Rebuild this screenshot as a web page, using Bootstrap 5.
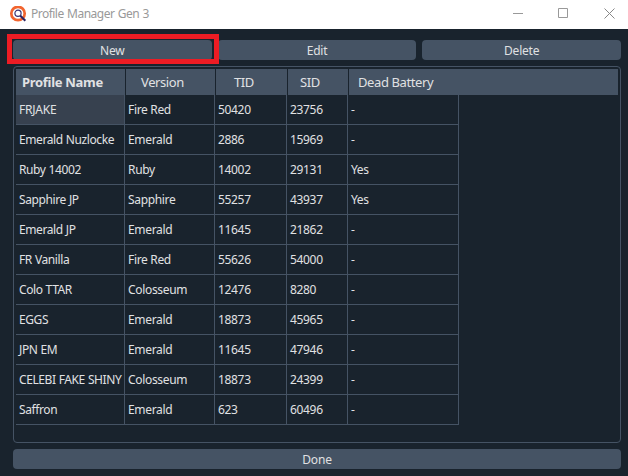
<!DOCTYPE html>
<html lang="en">
<head>
<meta charset="utf-8">
<title>Profile Manager Gen 3</title>
<link href="https://cdn.jsdelivr.net/npm/bootstrap@5.3.0/dist/css/bootstrap.min.css" rel="stylesheet">
<style>
body{width:628px;height:476px;overflow:hidden;background:#19232d;color:#e0e1e3;font:12px/18px "Noto Sans","Open Sans",sans-serif;letter-spacing:-.33px}
.titlebar{height:29px;background:#fff;color:#999;padding-left:9px}
.titlebar .caption{margin-left:4px;padding-bottom:1px;letter-spacing:-.52px;word-spacing:.8px}
.winctl{width:46px;height:27px}
.winctls{margin-right:-5px}
.client{height:447px;padding:11px 7px 7px 13px}
.tool{height:20px;padding:0;border:0;border-radius:4px;background:#455364;color:#e0e1e3;font-size:12px;line-height:21px;letter-spacing:-.2px}
.tool:hover{background:#54687a;color:#fff}
.actions{gap:6px}
.highlight{left:-6px;top:-6px;width:212px;height:30px;border:5px solid #ed1c24;pointer-events:none}
.frame{height:377px;margin:6px 0;border:1px solid #455364;border-radius:4px;padding:2px}
.grid-head{height:26px;background:#455364;font-size:13px;line-height:27px;letter-spacing:-.4px}
.grid-head>div{white-space:nowrap}
.grid-head>div+div{border-left:1px solid #19232d}
.grid-head .c1{padding-left:6px;letter-spacing:-.3px}
.grid-head .c2{padding-left:15px}
.grid-head .c3{padding-left:18px}
.grid-head .c4{padding-left:12px}
.grid-head .c5{padding-left:9px}
.grid-row{height:30px}
.grid-row>div{border-right:1px solid #455364;border-bottom:1px solid #455364;padding-left:3px;line-height:30px;white-space:nowrap}
.grid-row>.c1{letter-spacing:-.4px;word-spacing:.3px}
.grid-row>.picked{background:#37414f;letter-spacing:-.2px}
.c1{width:109px}.c2{width:90px}.c3{width:72px}.c4{width:61px}.c5{width:111px}
</style>
<script src="https://cdn.jsdelivr.net/npm/bootstrap@5.3.0/dist/js/bootstrap.bundle.min.js"></script>
</head>
<body>
<header class="titlebar d-flex align-items-center">
<svg width="18" height="18" viewBox="0 0 18 18" fill="none"><circle cx="9" cy="7.500" r="6.700" stroke="#f2652f" stroke-width="2.700"/><circle cx="9" cy="7.300" r="3.100" fill="#fff" stroke="#3a3272" stroke-width="1.200"/><path d="M11.300 9.700l5 5" stroke="#2b2363" stroke-width="2.100"/></svg>
<span class="caption">Profile Manager Gen 3</span>
<div class="winctls d-flex ms-auto align-self-start">
<svg class="winctl" viewBox="0 0 46 27"><path d="M18 13.500h10" stroke="#999"/></svg>
<svg class="winctl" viewBox="0 0 46 27"><path d="M17.500 8.500h9v9h-9z" fill="none" stroke="#999"/></svg>
<svg class="winctl" viewBox="0 0 46 27"><path d="M17.500 8.500l10 10M27.500 8.500l-10 10" stroke="#888"/></svg>
</div>
</header>
<main class="client">
<div class="actions d-flex position-relative">
<button class="btn tool flex-fill w-100">New</button><button class="btn tool flex-fill w-100">Edit</button><button class="btn tool flex-fill w-100">Delete</button>
<div class="highlight position-absolute"></div>
</div>
<section class="frame">
<div class="grid-head d-flex"><div class="c1 fw-bold">Profile Name</div><div class="c2">Version</div><div class="c3">TID</div><div class="c4">SID</div><div class="c5">Dead Battery</div></div>
<div class="grid-row d-flex"><div class="c1 picked">FRJAKE</div><div class="c2">Fire Red</div><div class="c3">50420</div><div class="c4">23756</div><div class="c5">-</div></div>
<div class="grid-row d-flex"><div class="c1">Emerald Nuzlocke</div><div class="c2">Emerald</div><div class="c3">2886</div><div class="c4">15969</div><div class="c5">-</div></div>
<div class="grid-row d-flex"><div class="c1">Ruby 14002</div><div class="c2">Ruby</div><div class="c3">14002</div><div class="c4">29131</div><div class="c5">Yes</div></div>
<div class="grid-row d-flex"><div class="c1">Sapphire JP</div><div class="c2">Sapphire</div><div class="c3">55257</div><div class="c4">43937</div><div class="c5">Yes</div></div>
<div class="grid-row d-flex"><div class="c1">Emerald JP</div><div class="c2">Emerald</div><div class="c3">11645</div><div class="c4">21862</div><div class="c5">-</div></div>
<div class="grid-row d-flex"><div class="c1">FR Vanilla</div><div class="c2">Fire Red</div><div class="c3">55626</div><div class="c4">54000</div><div class="c5">-</div></div>
<div class="grid-row d-flex"><div class="c1">Colo TTAR</div><div class="c2">Colosseum</div><div class="c3">12476</div><div class="c4">8280</div><div class="c5">-</div></div>
<div class="grid-row d-flex"><div class="c1">EGGS</div><div class="c2">Emerald</div><div class="c3">18873</div><div class="c4">45965</div><div class="c5">-</div></div>
<div class="grid-row d-flex"><div class="c1">JPN EM</div><div class="c2">Emerald</div><div class="c3">11645</div><div class="c4">47946</div><div class="c5">-</div></div>
<div class="grid-row d-flex"><div class="c1">CELEBI FAKE SHINY</div><div class="c2">Colosseum</div><div class="c3">18873</div><div class="c4">24399</div><div class="c5">-</div></div>
<div class="grid-row d-flex"><div class="c1">Saffron</div><div class="c2">Emerald</div><div class="c3">623</div><div class="c4">60496</div><div class="c5">-</div></div>
</section>
<button class="btn tool w-100 d-block">Done</button>
</main>
</body>
</html>
